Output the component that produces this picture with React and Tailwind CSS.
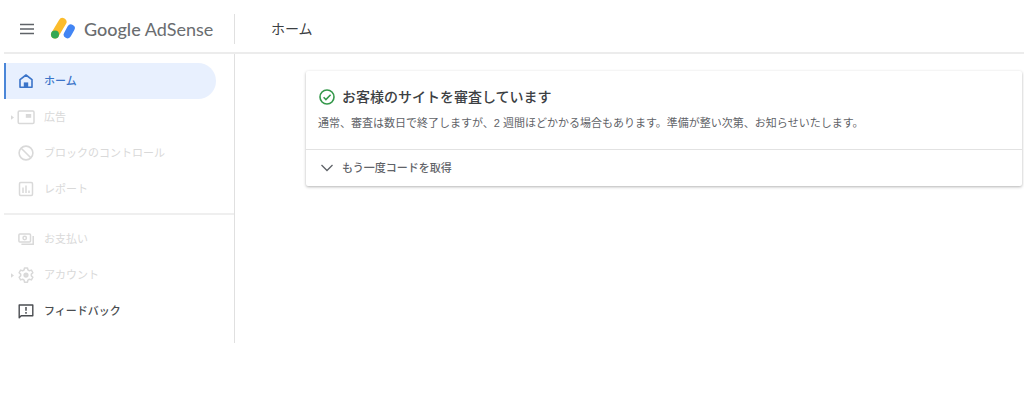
function HomeIcon() {
  return (
    <svg viewBox="0 0 16 16" className="size-4" fill="none" aria-hidden="true">
      <path d="M2 14.200V6.600L8 2l6 4.600v7.600z" stroke="currentColor" strokeWidth="1.600" strokeLinejoin="round" />
      <path d="M5.800 14V9.400h4.400V14z" fill="currentColor" />
    </svg>
  );
}

function AdsIcon() {
  return (
    <svg viewBox="0 0 16 16" className="size-4 overflow-visible" fill="none" aria-hidden="true">
      <rect x="0.2" y="2" width="15.800" height="12.400" rx="1.200" stroke="currentColor" strokeWidth="1.500" />
      <path d="M7.800 5h5.400v3.800H7.800z" fill="currentColor" />
    </svg>
  );
}

function BlockIcon() {
  return (
    <svg viewBox="0 0 16 16" className="size-4" fill="none" stroke="currentColor" strokeWidth="1.600" aria-hidden="true">
      <circle cx="8" cy="8" r="6.900" />
      <path d="M3.200 3.200l9.600 9.600" />
    </svg>
  );
}

function ReportIcon() {
  return (
    <svg viewBox="0 0 16 16" className="size-4" fill="none" stroke="currentColor" strokeWidth="1.500" aria-hidden="true">
      <rect x="1.500" y="1.500" width="13" height="13" rx="1.200" />
      <path d="M5 6.500V12M8 4.600V12M11 9.600V12" />
    </svg>
  );
}

function PaymentsIcon() {
  return (
    <svg viewBox="0 0 16 16" className="size-4" fill="none" stroke="currentColor" strokeWidth="1.500" aria-hidden="true">
      <rect x="0.900" y="3" width="11.600" height="8" rx="1" />
      <path d="M15.200 5v8.200H3.400" />
      <circle cx="6.700" cy="7" r="1.700" />
    </svg>
  );
}

function GearIcon() {
  return (
    <svg viewBox="0 0 24 24" className="size-[18px] shrink-0" fill="none" stroke="currentColor" aria-hidden="true">
      <path
        d="M10 2.500h4l.6 2.800 1.900 1.100 2.700-.9 2 3.500-2.100 1.900v2.200l2.100 1.900-2 3.500-2.700-.9-1.900 1.100-.6 2.800h-4l-.6-2.800-1.900-1.100-2.700.9-2-3.500 2.100-1.900v-2.200L2.800 9l2-3.500 2.700.9 1.900-1.100z"
        strokeWidth="2"
        strokeLinejoin="round"
      />
      <circle cx="12" cy="12" r="2" strokeWidth="3" />
    </svg>
  );
}

function FeedbackIcon() {
  return (
    <svg viewBox="0 0 16 16" className="size-4" fill="none" aria-hidden="true">
      <path d="M1.200 14.800V2h13.600v10.800H3.200z" stroke="currentColor" strokeWidth="1.400" strokeLinejoin="round" />
      <path d="M8 4v3.800M8 9v1.800" stroke="currentColor" strokeWidth="1.500" />
    </svg>
  );
}

function AdSenseLogo() {
  return (
    <svg viewBox="0 0 26 24" className="h-6 w-[26px]" aria-hidden="true">
      <path d="M5 17.500L12.500 5" stroke="#fbbc2c" strokeWidth="8" strokeLinecap="round" />
      <path d="M17.500 17.500L21 11.200" stroke="#4285f4" strokeWidth="7.600" strokeLinecap="round" />
      <circle cx="5" cy="17.500" r="4" fill="#34a853" />
    </svg>
  );
}

const mainItems = [
  { label: "ホーム", icon: HomeIcon, active: true },
  { label: "広告", icon: AdsIcon, expandable: true },
  { label: "ブロックのコントロール", icon: BlockIcon },
  { label: "レポート", icon: ReportIcon },
];

const otherItems = [
  { label: "お支払い", icon: PaymentsIcon },
  { label: "アカウント", icon: GearIcon, expandable: true },
  { label: "フィードバック", icon: FeedbackIcon, enabled: true },
];

function NavItem({ item }) {
  const Icon = item.icon;
  let tone = "border-transparent text-[#d9d9d9]";
  if (item.active) tone = "border-[#4a86d8] bg-[#e8f0fe] font-medium text-[#3b74c9]";
  if (item.enabled) tone = "border-transparent font-medium text-[#4a4d51]";

  return (
    <li>
      <a
        href="#"
        aria-current={item.active ? "page" : undefined}
        className={`mr-[18px] flex h-9 items-center rounded-r-full border-l-2 text-[11px] ${tone}`}
      >
        <span className="flex w-3 justify-center">
          {item.expandable && (
            <svg viewBox="0 0 4 6" className="h-[5px] w-[3px]" fill="currentColor" aria-hidden="true">
              <path d="M0 0l4 3-4 3z" />
            </svg>
          )}
        </span>
        <span className="flex w-4 justify-center">
          <Icon />
        </span>
        <span className="ml-2.5">{item.label}</span>
      </a>
    </li>
  );
}

export default function App() {
  return (
    <div className="min-h-screen bg-white pl-1 font-['Liberation_Sans','Noto_Sans_CJK_JP',sans-serif] text-[#5f6368]">
      <header className="flex h-[54px] items-center border-b-2 border-[#ececec] pt-1.5">
        <div className="flex h-[30px] w-[231px] shrink-0 items-center border-r border-[#e0e0e0]">
          <button type="button" aria-label="メニュー" className="ml-4 flex h-6 w-4 items-center">
            <svg viewBox="0 0 14 12" className="h-3 w-3.5" stroke="#5f6368" strokeWidth="1.700" aria-hidden="true">
              <path d="M0 1.500h14M0 6h14M0 10.500h14" />
            </svg>
          </button>
          <a href="#" className="ml-3.5 flex items-center gap-2 font-['Lato',sans-serif] text-lg text-[#6a6d70]">
            <AdSenseLogo />
            <span className="whitespace-nowrap">
              <span className="font-medium">Google</span> AdSense
            </span>
          </a>
        </div>
        <h1 className="ml-9 text-sm text-[#3c4043]">ホーム</h1>
      </header>

      <div className="flex">
        <nav className="h-[289px] w-[231px] shrink-0 border-r border-[#e0e0e0] pt-[9px]">
          <ul>
            {mainItems.map((item) => (
              <NavItem key={item.label} item={item} />
            ))}
          </ul>
          <hr className="my-1.5 border-t-2 border-[#efefef]" />
          <ul>
            {otherItems.map((item) => (
              <NavItem key={item.label} item={item} />
            ))}
          </ul>
        </nav>

        <main className="min-w-0 flex-1 pt-[17px] pr-0.5 pl-[71px]">
          <section className="rounded-xs shadow-[0_1px_3px_rgba(0,0,0,0.3)]">
            <div className="px-3 pt-4 pb-[18px]">
              <div className="flex items-center gap-1.5">
                <svg viewBox="0 0 18 18" className="size-[18px]" fill="none" stroke="#34984a" aria-hidden="true">
                  <circle cx="9" cy="9" r="7" strokeWidth="1.600" />
                  <path d="M5.600 9.200l2.300 2.300 4.700-4.700" strokeWidth="1.600" />
                </svg>
                <h2 className="text-sm font-medium text-[#3c4043]">お客様のサイトを審査しています</h2>
              </div>
              <p className="mt-2 text-[11px] leading-4">
                通常、審査は数日で終了しますが、2 週間ほどかかる場合もあります。準備が整い次第、お知らせいたします。
              </p>
            </div>
            <button
              type="button"
              aria-expanded="false"
              className="flex h-[37px] w-full items-center gap-1.5 border-t border-[#e2e2e2] px-3 text-[11px] font-medium"
            >
              <svg viewBox="0 0 18 18" className="size-[18px]" fill="none" stroke="#5f6368" strokeWidth="1.300" aria-hidden="true">
                <path d="M3.500 6l5.500 5.500L14.500 6" />
              </svg>
              もう一度コードを取得
            </button>
          </section>
        </main>
      </div>
    </div>
  );
}
